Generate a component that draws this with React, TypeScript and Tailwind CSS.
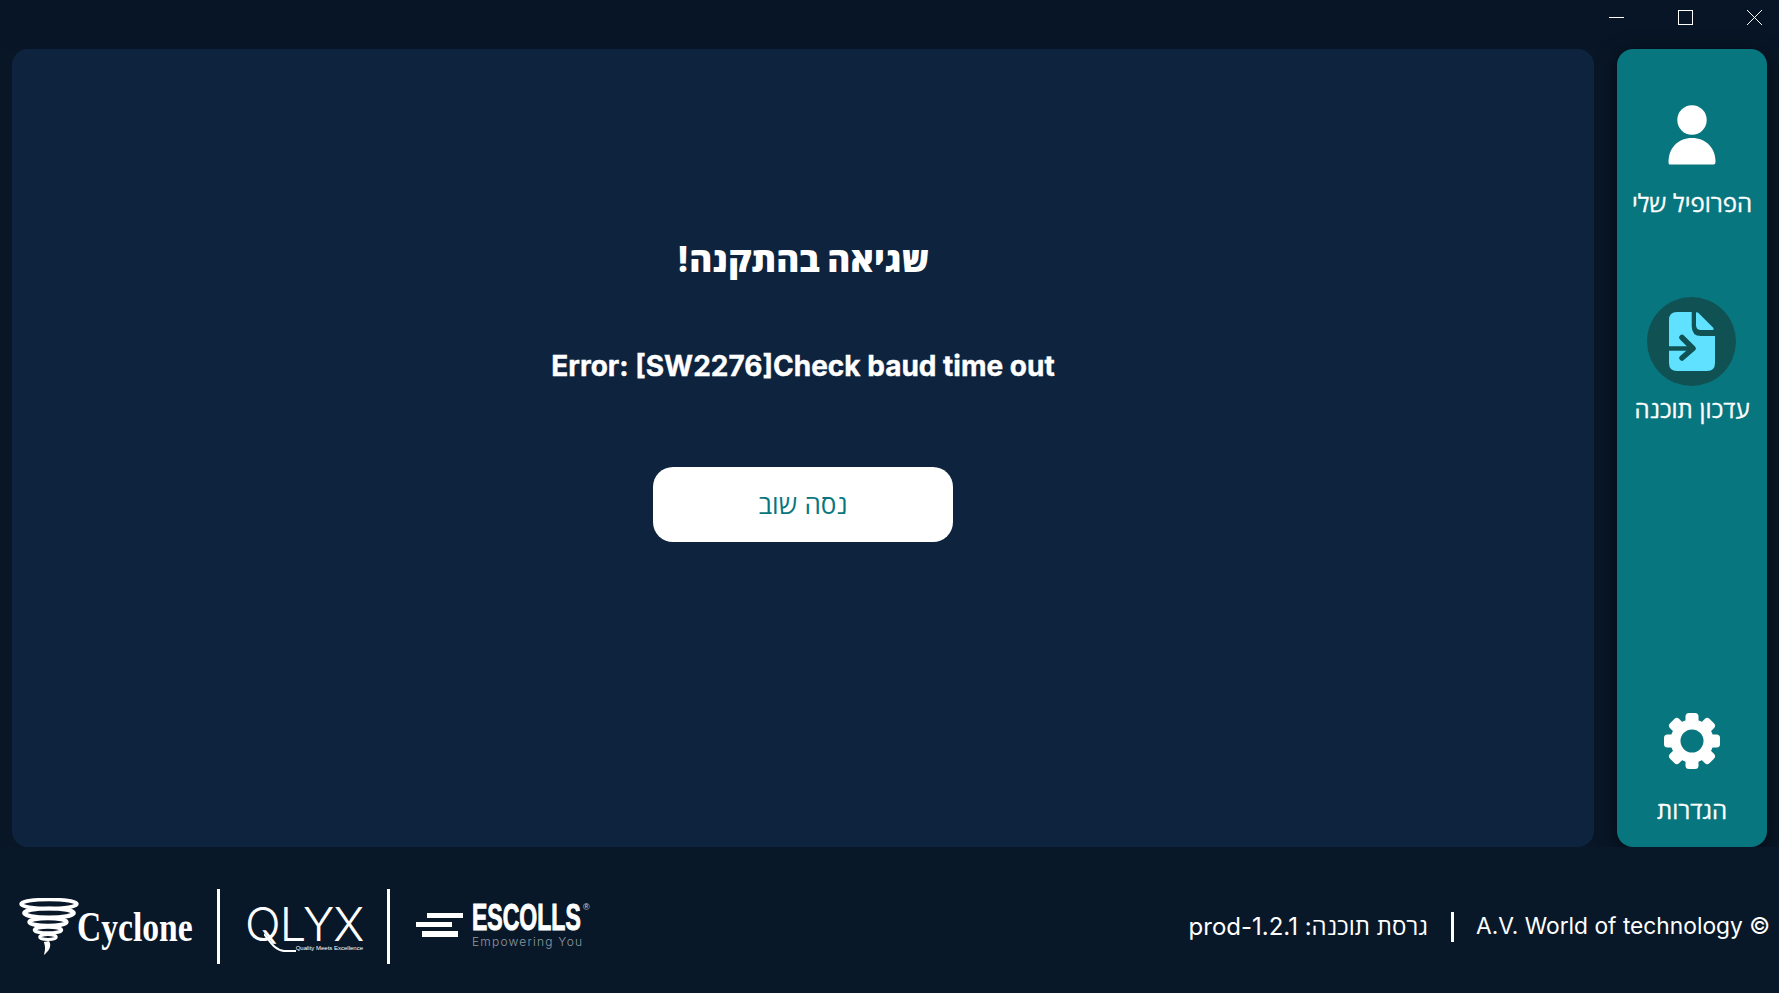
const font = { fontFamily: 'Inter, "Open Sans", "Liberation Sans", sans-serif' };

function Person() {
  return (
    <svg width="48" height="60" viewBox="0 0 48 60" fill="#fff">
      <circle cx="24" cy="15" r="14.7" />
      <path d="M1.5 59.5 Q0.5 59.5 0.5 57 C0.5 43 10 33 24 33 C38 33 47.5 43 47.5 57 Q47.5 59.5 45.5 59.5Z" />
    </svg>
  );
}

function DocIcon() {
  return (
    <svg width="46" height="59" viewBox="0 0 46 59">
      <path fill="#5fe1ff" d="M8 0H22.7V14Q22.7 24 32 24H46V51Q46 59 38 59H8Q0 59 0 51V8Q0 0 8 0Z" />
      <path fill="#5fe1ff" d="M27 0.5Q28 0 29.5 1L44 15.5Q45.5 18 43.5 18H32Q27 18 27 13Z" />
      <path d="M0 36.5H23" stroke="#105254" strokeWidth="4.5" fill="none" />
      <path d="M13 25.5L24 36.5L13 46" stroke="#105254" strokeWidth="5.5" strokeLinecap="round" strokeLinejoin="round" fill="none" />
    </svg>
  );
}

function Gear() {
  return (
    <svg width="56" height="56" viewBox="0 0 56 56" fill="#fff">
      <circle cx="28" cy="28" r="16.5" fill="none" stroke="#fff" strokeWidth="10" />
      {[0, 45, 90, 135, 180, 225, 270, 315].map((a) => (
        <rect key={a} x="21.5" y="0" width="13" height="12" rx="3.5" transform={`rotate(${a} 28 28)`} />
      ))}
    </svg>
  );
}

function Tornado() {
  return (
    <svg className="shrink-0" width="62" height="58" viewBox="0 0 60 58" preserveAspectRatio="none" fill="none" stroke="#fff">
      <ellipse cx="30" cy="6" rx="27" ry="4.5" strokeWidth="3.5" />
      <ellipse cx="30" cy="15" rx="24" ry="4.5" strokeWidth="4" />
      <ellipse cx="29" cy="24" rx="18" ry="3.8" strokeWidth="4" />
      <ellipse cx="29" cy="32" rx="13" ry="3" strokeWidth="3.5" />
      <ellipse cx="29" cy="39" rx="8" ry="2.4" strokeWidth="3" />
      <path d="M30 43C33 48 30 53 25 57C27 51 26 47 25 44Z" fill="#fff" stroke="none" />
    </svg>
  );
}

function Logos() {
  return (
    <div dir="ltr" className="flex items-center h-[75px]">
      <div className="w-[217px] flex items-center pl-[18px]">
        <Tornado />
        <span className="text-white text-[42px] leading-none font-bold ml-[-3px] origin-left scale-x-[0.8] whitespace-nowrap" style={{ fontFamily: '"Liberation Serif", serif' }}>Cyclone</span>
      </div>
      <div className="w-[3px] h-[75px] bg-white" />
      <div className="w-[167px] pl-[25px] pt-[4px] flex flex-col items-start relative">
        <span className="text-white text-[47px] leading-[38px] font-light tracking-[-1px]" style={{ fontFamily: 'Inter, sans-serif' }}>QLYX</span>
        <span className="self-end mr-[24px] mt-[1px] text-white text-[6px] leading-[8px] whitespace-nowrap" style={{ fontFamily: '"Liberation Sans", sans-serif' }}>Quality Meets Excellence</span>
        <svg className="absolute left-[44px] top-[30px]" width="32" height="24" viewBox="0 0 32 24" fill="none" stroke="#fff" strokeWidth="2"><path d="M0 3C6 10 10 19 20 20H32" /></svg>
      </div>
      <div className="w-[3px] h-[75px] bg-white" />
      <div className="flex items-center pl-[26px]">
        <div className="flex flex-col gap-[4px] w-[47px] mr-[9px] mb-[4px]">
          <div className="h-[5px] w-[36px] bg-white ml-[11px]" />
          <div className="h-[5px] w-[36px] bg-white" />
          <div className="h-[6px] w-[36px] bg-white ml-[6px]" />
        </div>
        <div className="flex flex-col w-[112px] mt-[-3px] relative">
          <div className="flex items-start h-[32px]">
            <span className="text-white text-[36px] leading-[32px] font-bold origin-left scale-x-[0.64] whitespace-nowrap [-webkit-text-stroke:1px_white]" style={{ fontFamily: '"Liberation Sans", sans-serif' }}>ESCOLLS</span>
          </div>
          <span className="text-[#8f99a2] text-[12px] leading-[14px] tracking-[1.2px] mt-[1px] font-light whitespace-nowrap" style={{ fontFamily: 'Inter, sans-serif' }}>Empowering You</span>
          <span className="absolute left-[111px] top-[-1px] text-[#d7dbde] text-[9px] leading-[12px]" style={{ fontFamily: '"Liberation Sans", sans-serif' }}>®</span>
        </div>
      </div>
    </div>
  );
}

export default function App() {
  return (
    <div dir="rtl" className="w-[1779px] h-[993px] bg-[#081626] flex flex-col overflow-hidden" style={font}>
      <div dir="ltr" className="h-[49px] shrink-0 flex justify-end items-start pt-[10px] pr-[17px] gap-[54px] bg-[#071526]">
        <svg width="15" height="15" viewBox="0 0 15 15" stroke="#fff" fill="none"><path d="M0 7.5H15" /></svg>
        <svg width="15" height="15" viewBox="0 0 15 15" stroke="#fff" fill="none"><rect x="0.5" y="0.5" width="14" height="14" /></svg>
        <svg width="15" height="15" viewBox="0 0 15 15" stroke="#fff" fill="none"><path d="M0 0L15 15M15 0L0 15" /></svg>
      </div>

      <div className="h-[798px] shrink-0 flex pr-[12px] pl-[12px] gap-[23px]">
        <aside className="w-[150px] shrink-0 rounded-[16px] bg-[#08767e] shadow-[0_4px_20px_rgba(0,0,0,0.55)] flex flex-col items-center text-white text-[24px] leading-[30px] [-webkit-text-stroke:0.3px_white] pt-[56px] pb-[21px]">
          <Person />
          <div className="mt-[24px]">הפרופיל שלי</div>
          <div className="mt-[78px] mr-[1px] w-[89px] h-[89px] rounded-full bg-[#105254] flex items-center justify-center"><DocIcon /></div>
          <div className="mt-[9px]">עדכון תוכנה</div>
          <div className="mt-auto"><Gear /></div>
          <div className="mt-[27px]">הגדרות</div>
        </aside>
        <main className="flex-1 rounded-[16px] bg-[#0e243e] flex flex-col items-center text-white pt-[187px]">
          <h1 className="text-[35px] leading-[46px] font-extrabold">שגיאה בהתקנה!</h1>
          <p dir="ltr" className="mt-[64px] text-[28px] leading-[40px] font-bold [-webkit-text-stroke:0.4px_white]">Error: [SW2276]Check baud time out</p>
          <button className="mt-[81px] w-[300px] h-[75px] rounded-[20px] bg-white text-[#08767e] text-[26px]">נסה שוב</button>
        </main>
      </div>

      <footer className="flex-1 flex items-center justify-between pt-[13px] pr-[9px] pl-0 bg-[#091828] text-white">
        <div className="flex items-center">
          <span className="text-[22.75px]">© A.V. World of technology</span>
          <span className="w-[3px] h-[30px] bg-white mr-[22px] ml-[23px]" />
          <span className="text-[24px]">גרסת תוכנה: prod-1.2.1</span>
        </div>
        <Logos />
      </footer>
    </div>
  );
}
